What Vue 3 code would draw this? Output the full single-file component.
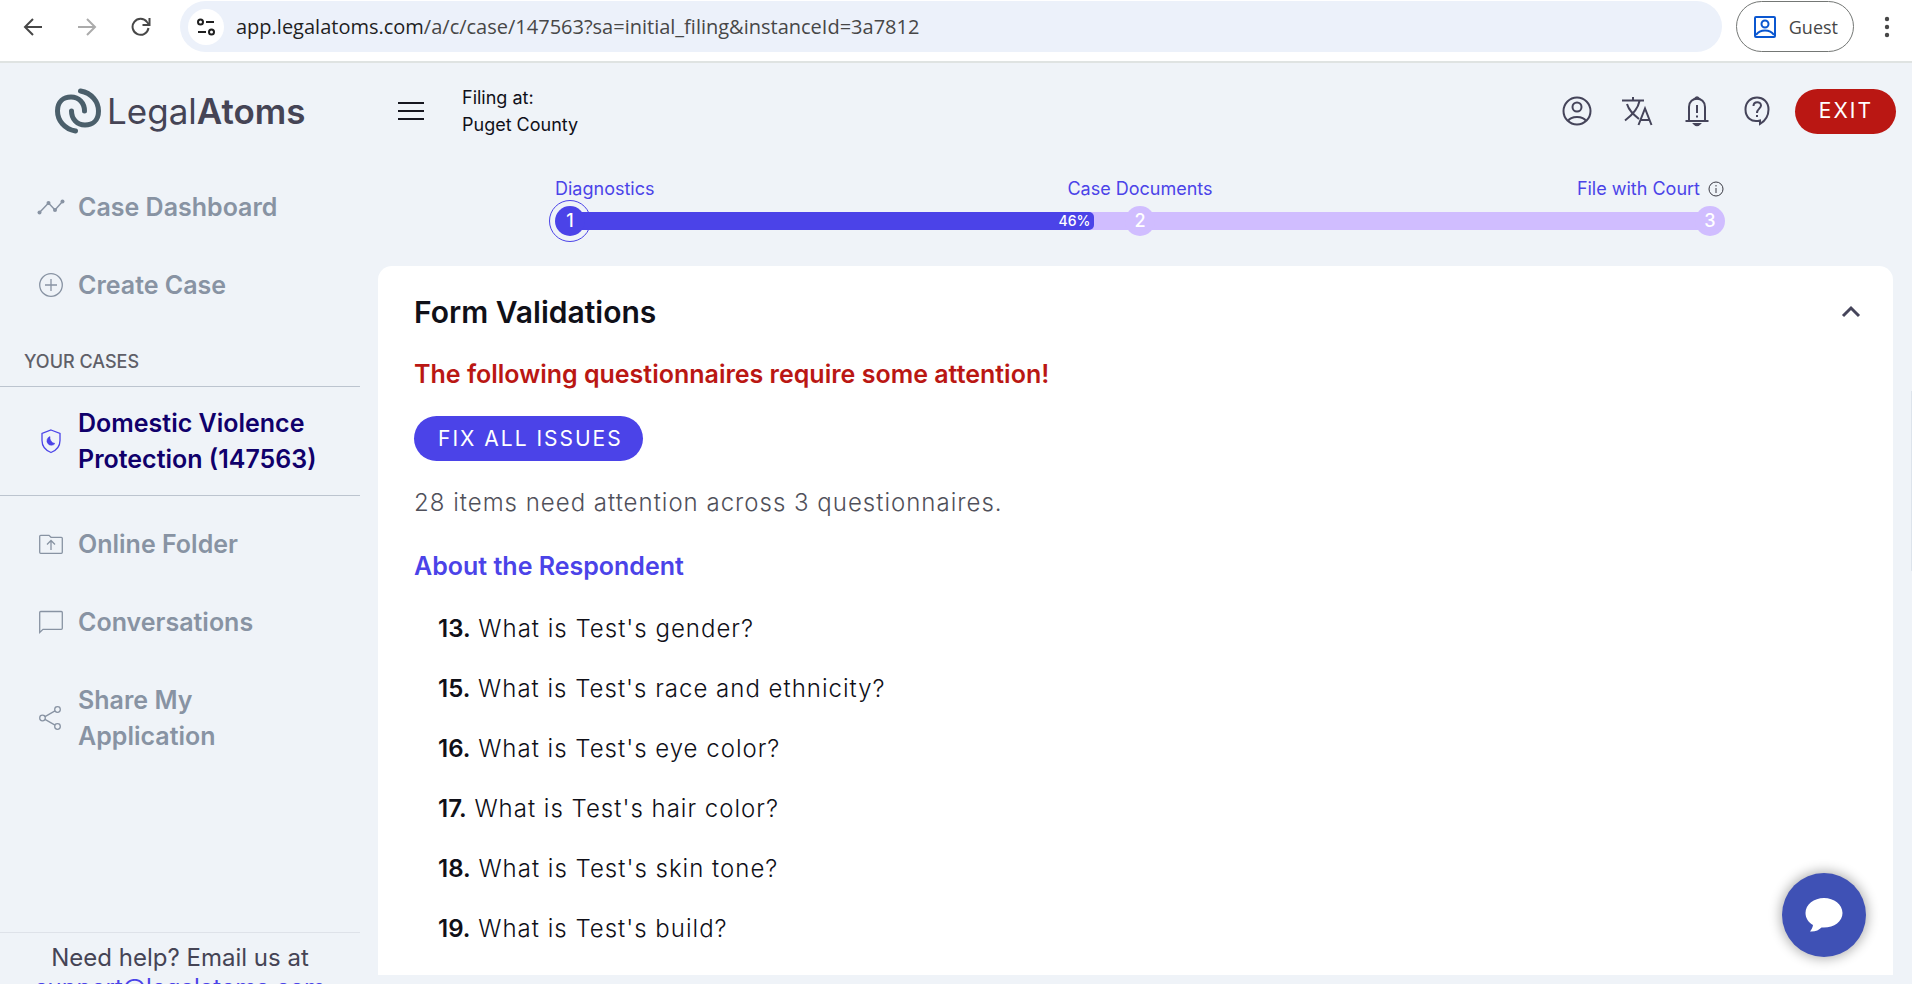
<script setup>
const primaryNav = [
  { label: 'Case Dashboard', icon: 'trend' },
  { label: 'Create Case', icon: 'plus' },
]
const secondaryNav = [
  { label: 'Online Folder', icon: 'folder' },
  { label: 'Conversations', icon: 'chat' },
  { label: 'Share My Application', icon: 'share' },
]
const progress = 46
const issues = [
  { no: 13, text: "What is Test's gender?" },
  { no: 15, text: "What is Test's race and ethnicity?" },
  { no: 16, text: "What is Test's eye color?" },
  { no: 17, text: "What is Test's hair color?" },
  { no: 18, text: "What is Test's skin tone?" },
  { no: 19, text: "What is Test's build?" },
]
</script>

<template>
  <div class="window">
    <div class="browser">
      <button class="tool" aria-label="Back">
        <svg width="20" height="20" viewBox="0 0 20 20" fill="none" stroke="#474747" stroke-width="2"><path d="M19 10H2M10 2l-8 8 8 8" /></svg>
      </button>
      <button class="tool" aria-label="Forward">
        <svg width="20" height="20" viewBox="0 0 20 20" fill="none" stroke="#ababab" stroke-width="2"><path d="M1 10h17M10 2l8 8-8 8" /></svg>
      </button>
      <button class="tool" aria-label="Reload">
        <svg width="20" height="20" viewBox="0 0 20 20" fill="none" stroke="#474747" stroke-width="2"><path d="M17.5 11a8 8 0 1 1-1.5-6l2 2.500" /><path d="M18.500 1v7h-7" /></svg>
      </button>
      <div class="omnibox">
        <button class="site" aria-label="Site information">
          <svg width="20" height="20" viewBox="0 0 20 20" fill="none" stroke="#1f1f1f" stroke-width="2"><circle cx="4.500" cy="5" r="2.500" /><path d="M10 5h8M2 15h8" /><circle cx="15.500" cy="15" r="2.500" /></svg>
        </button>
        <div class="url"><span class="host">app.legalatoms.com</span>/a/c/case/147563?sa=initial_filing&amp;instanceId=3a7812</div>
      </div>
      <button class="guest">
        <svg width="24" height="24" viewBox="0 0 24 24" fill="none" stroke="#0b57d0" stroke-width="2"><rect x="2" y="2" width="20" height="20" rx="1" /><circle cx="12" cy="9" r="3.500" /><path d="M3 20c4-6 14-6 18 0" /></svg>
        Guest
      </button>
      <button class="kebab" aria-label="Menu">
        <svg width="6" height="22" viewBox="0 0 6 22" fill="#474747"><circle cx="3" cy="3" r="2.200" /><circle cx="3" cy="11" r="2.200" /><circle cx="3" cy="19" r="2.200" /></svg>
      </button>
    </div>

    <div class="app">
      <aside class="sidebar">
        <a class="logo" href="#">
          <svg width="46" height="46" viewBox="0 0 46 46" fill="none" stroke="#4b5f6b" stroke-width="5" stroke-linecap="round"><path d="M25.500 3C37 5 43.500 14 43.500 23C43.500 33 37 37 30 37C22 37 16.500 31 16.500 23" /><path d="M20.500 43C9 41 2.500 32 2.500 23C2.500 13 9 9 16 9C24 9 29.500 15 29.500 23" /></svg>
          <span class="brand">Legal<b>Atoms</b></span>
        </a>
        <nav class="nav">
          <a v-for="item in primaryNav" :key="item.label" class="item" href="#">
            <svg v-if="item.icon === 'trend'" width="28" height="28" viewBox="0 0 28 28" fill="none" stroke="currentColor" stroke-width="1.500"><path d="M2.500 19.500l9-9.500 6.500 7 7.500-8.500" /><g fill="currentColor" stroke="none"><circle cx="2.500" cy="19.500" r="2" /><circle cx="11.500" cy="10" r="2" /><circle cx="18" cy="17" r="2" /><circle cx="25.500" cy="8.500" r="2" /></g></svg>
            <svg v-else width="28" height="28" viewBox="0 0 28 28" fill="none" stroke="currentColor" stroke-width="1.300"><circle cx="14" cy="14" r="11.300" /><path d="M14 8v12M8 14h12" /></svg>
            <span>{{ item.label }}</span>
          </a>
          <h2 class="group">YOUR CASES</h2>
          <a class="item current" href="#">
            <svg width="28" height="28" viewBox="0 0 28 28" fill="none" stroke="#4b43e8" stroke-width="1.300"><path d="M14 3l9 3.500v7c0 6-4 10-9 12-5-2-9-6-9-12v-7z" /><path d="M13 9.500a4.500 4.500 0 1 0 5 7 6 6 0 0 1-5-7z" fill="#4b43e8" stroke-width=".5" /></svg>
            <span>Domestic Violence Protection (147563)</span>
          </a>
          <a v-for="item in secondaryNav" :key="item.label" class="item" href="#">
            <svg v-if="item.icon === 'folder'" width="28" height="28" viewBox="0 0 28 28" fill="none" stroke="currentColor" stroke-width="1.300"><path d="M2.700 22.300v-16q0-1 1-1H12l2 2h10.300q1 0 1 1v14q0 1-1 1H3.700q-1 0-1-1z" /><path d="M14 20v-9M10 14.500l4-4 4 4" /></svg>
            <svg v-else-if="item.icon === 'chat'" width="28" height="28" viewBox="0 0 28 28" fill="none" stroke="currentColor" stroke-width="1.300"><path d="M2.700 24.500V4.500q0-1 1-1h20.600q1 0 1 1v15.800q0 1-1 1H6z" /></svg>
            <svg v-else width="28" height="28" viewBox="0 0 28 28" fill="none" stroke="currentColor" stroke-width="1.300"><circle cx="5.500" cy="14" r="2.800" /><circle cx="20.500" cy="5.500" r="2.800" /><circle cx="20.500" cy="22.500" r="2.800" /><path d="M8 12.600l10-5.700M8 15.400l10 5.700" /></svg>
            <span>{{ item.label }}</span>
          </a>
        </nav>
        <div class="help">Need help? Email us at <a href="mailto:support@legalatoms.com">support@legalatoms.com</a></div>
      </aside>

      <div class="content">
        <header class="topbar">
          <button class="burger" aria-label="Toggle menu">
            <svg width="26" height="20" viewBox="0 0 26 20" stroke="#16161f" stroke-width="2"><path d="M0 2h26M0 10h26M0 18h26" /></svg>
          </button>
          <p class="filing">Filing at:<br />Puget County</p>
          <div class="actions">
            <button aria-label="Account">
              <svg width="32" height="32" viewBox="0 0 32 32"><circle cx="16" cy="16" r="13.500" /><circle cx="16" cy="12" r="4.500" /><path d="M7 26c3-5.500 15-5.500 18 0" /></svg>
            </button>
            <button aria-label="Language">
              <svg width="32" height="32" viewBox="0 0 32 32"><path d="M1 5.500h22M12 2v3.500M6 9c2 7 7 11 12 15M18.500 6C17 14 10 21 4 25.500" /><path d="M17.500 30L24 13.500 30.500 30M19.500 25h9" /></svg>
            </button>
            <button aria-label="Notifications">
              <svg width="32" height="32" viewBox="0 0 32 32"><path d="M4.500 26h23M8 26V12c0-11 16-11 16 0v14M16 10v8M16 20.500v2" /><path d="M14 3.500q2-2.500 4 0zM13.500 29h5q-2.500 2.500-5 0z" fill="#45445a" /></svg>
            </button>
            <button aria-label="Help">
              <svg width="32" height="32" viewBox="0 0 32 32"><path d="M19 29v-3.500C10 28 4.500 22 4.500 14.500c0-16 23-16 23 0C27.500 21 24 26 19 29z" /><path d="M12.500 11c0-5 7.500-5 7.500-.5 0 3-4 3.500-4 7.500M16 20v2" /></svg>
            </button>
            <button class="exit">EXIT</button>
          </div>
        </header>

        <section class="stepper" aria-label="Progress">
          <div class="labels">
            <span>Diagnostics</span>
            <span>Case Documents</span>
            <span class="last">File with Court
              <svg width="16" height="16" viewBox="0 0 16 16" fill="none" stroke="#3a3a44"><circle cx="8" cy="8" r="7" /><path d="M8 7v5M8 4v1.500" /></svg>
            </span>
          </div>
          <div class="track">
            <i class="ring"></i>
            <div class="bar"><div class="fill" :style="{ width: progress + '%' }">{{ progress }}%</div></div>
            <span class="dot active">1</span>
            <span class="dot">2</span>
            <span class="dot">3</span>
          </div>
        </section>

        <main class="card">
          <div class="card-head">
            <h1>Form Validations</h1>
            <button aria-label="Collapse">
              <svg width="24" height="24" viewBox="0 0 24 24" fill="none" stroke="#45445a" stroke-width="3"><path d="M4 16l8-8 8 8" /></svg>
            </button>
          </div>
          <p class="alert">The following questionnaires require some attention!</p>
          <button class="fix">FIX ALL ISSUES</button>
          <p class="summary">28 items need attention across 3 questionnaires.</p>
          <a class="section" href="#">About the Respondent</a>
          <ul class="issues">
            <li v-for="q in issues" :key="q.no"><b>{{ q.no }}.</b> {{ q.text }}</li>
          </ul>
        </main>
      </div>
    </div>

    <i class="scroll-thumb"></i>
    <button class="bubble" aria-label="Open chat">
      <svg width="38" height="36" viewBox="0 0 38 36" fill="#fff"><path d="M19 1C9 1 .5 7.500.5 16c0 5 3 9.500 7.500 12-.3 2.500-1.500 4.500-3 6.500 5 .5 9-1.500 11.500-4 11.500 1 21-5.500 21-14.500C37.500 7.500 29 1 19 1z" /></svg>
    </button>
  </div>
</template>

<style>
body {
  margin: 0;
  overflow: hidden;
}
</style>

<style scoped>
.window {
  position: relative;
  display: flex;
  flex-direction: column;
  height: 100vh;
  overflow: hidden;
  background: #eff3f8;
  color: #101018;
  font-family: Inter, "Liberation Sans", sans-serif;
  font-size: 24px;
  line-height: 36px;
}
button {
  padding: 0;
  border: 0;
  background: none;
  color: inherit;
  font: inherit;
  cursor: pointer;
}
a {
  text-decoration: none;
}
h1,
h2,
p,
ul {
  margin: 0;
  padding: 0;
}
svg {
  display: block;
  flex: none;
}

.browser {
  display: flex;
  flex: none;
  align-items: flex-start;
  height: 60px;
  padding: 1px 22px 0 22px;
  border-bottom: 2px solid #dfe3e2;
  background: #fff;
  font-family: "Open Sans", "Noto Sans", sans-serif;
}
.tool {
  display: flex;
  align-items: center;
  justify-content: center;
  width: 22px;
  height: 51px;
  margin-right: 32px;
}
.tool:nth-child(3) {
  margin-right: 28px;
}
.omnibox {
  display: flex;
  flex: 1;
  align-items: center;
  height: 51px;
  padding-left: 8px;
  border-radius: 26px;
  background: #ecf1fa;
}
.site {
  display: flex;
  align-items: center;
  justify-content: center;
  width: 36px;
  height: 36px;
  border-radius: 50%;
  background: #fff;
}
.url {
  margin-left: 12px;
  color: #474747;
  font-size: 20px;
}
.host {
  color: #1f1f1f;
}
.guest {
  display: flex;
  align-items: center;
  gap: 12px;
  height: 51px;
  margin: 0 30px 0 14px;
  padding: 0 15px 0 16px;
  border: 1px solid #747775;
  border-radius: 26px;
  color: #474747;
  font-size: 18px;
}
.kebab {
  display: flex;
  align-items: center;
  height: 51px;
}

.app {
  display: flex;
  flex: 1;
  min-height: 0;
}
.sidebar {
  display: flex;
  flex: none;
  flex-direction: column;
  width: 360px;
}
.logo {
  display: flex;
  align-items: center;
  gap: 6px;
  height: 96px;
  padding-left: 55px;
  color: #454455;
  font-size: 35px;
}
.brand b {
  font-weight: 600;
}
.nav {
  flex: 1;
  min-height: 0;
  padding-top: 9px;
  overflow: hidden;
}
.item {
  display: flex;
  align-items: center;
  gap: 13px;
  padding: 21px 30px 21px 37px;
  color: #8893a3;
  font-size: 25px;
  font-weight: 600;
}
.item:last-child {
  padding-right: 120px;
}
.group {
  padding: 22px 24px 8px;
  color: #5f5f68;
  font-size: 18px;
  font-weight: 500;
  line-height: 32px;
}
.current {
  margin-bottom: 9px;
  padding-top: 18px;
  padding-bottom: 18px;
  border-top: 1px solid #bcc4cf;
  border-bottom: 1px solid #bcc4cf;
  color: #10006b;
}
.help {
  height: 41px;
  padding: 10px 20px 0;
  overflow: hidden;
  border-top: 1px solid #dee2e9;
  color: #454455;
  line-height: 30px;
  text-align: center;
}
.help a {
  color: #4b43e8;
}

.content {
  flex: 1;
  min-width: 0;
  padding: 0 19px 9px 18px;
  overflow: hidden;
}
.topbar {
  display: flex;
  align-items: center;
  height: 96px;
  padding-left: 20px;
}
.filing {
  margin-left: 38px;
  font-size: 18px;
  line-height: 27px;
}
.actions {
  display: flex;
  align-items: center;
  gap: 28px;
  margin: 0 -3px 0 auto;
}
.actions svg {
  fill: none;
  stroke: #45445a;
  stroke-width: 2;
}
.actions .exit {
  height: 45px;
  margin-left: -6px;
  padding: 0 23px 0 24px;
  border-radius: 23px;
  background: #ba1713;
  color: #fff;
  font-size: 21px;
  letter-spacing: 2px;
}

.stepper {
  padding: 16px 168px 29px 177px;
}
.labels {
  display: grid;
  grid-template-columns: 1fr auto 1fr;
  color: #4b43e8;
  font-size: 18px;
  line-height: 28px;
}
.last {
  display: flex;
  align-items: center;
  justify-content: flex-end;
  gap: 8px;
  padding-right: 1px;
}
.track {
  position: relative;
  display: flex;
  align-items: center;
  justify-content: space-between;
  height: 32px;
  margin-top: 2px;
}
.bar {
  position: absolute;
  right: 15px;
  left: 15px;
  height: 18px;
  background: #d0bdff;
}
.fill {
  box-sizing: border-box;
  height: 18px;
  padding-right: 4px;
  border-radius: 0 5px 5px 0;
  background: #4b43e8;
  color: #fff;
  font-size: 14px;
  font-weight: 500;
  line-height: 18px;
  text-align: right;
}
.dot {
  position: relative;
  width: 30px;
  height: 30px;
  border-radius: 50%;
  background: #d0bdff;
  color: #fff;
  font-size: 18px;
  font-weight: 500;
  line-height: 30px;
  text-align: center;
}
.dot.active {
  background: #4b43e8;
}
.ring {
  position: absolute;
  left: -6px;
  width: 40px;
  height: 40px;
  border: 1px solid #4b43e8;
  border-radius: 50%;
}

.card {
  padding: 24px 30px 28px 36px;
  border-radius: 14px 14px 0 0;
  background: #fff;
}
.card-head {
  display: flex;
  align-items: center;
  justify-content: space-between;
}
h1 {
  font-size: 30px;
  font-weight: 600;
  line-height: 44px;
}
.alert {
  margin-top: 22px;
  color: #ba1713;
  font-size: 25px;
  font-weight: 600;
}
.fix {
  display: block;
  height: 45px;
  margin: 24px 0;
  padding: 0 20px 0 24px;
  border-radius: 23px;
  background: #4b43e8;
  color: #fff;
  font-size: 21px;
  letter-spacing: 2px;
}
.summary {
  color: #50505a;
  font-weight: 300;
  letter-spacing: 1px;
}
.section {
  display: block;
  margin: 27px 0;
  color: #4b43e8;
  font-size: 25px;
  font-weight: 600;
}
.issues {
  display: grid;
  gap: 24px;
  padding-left: 24px;
  font-weight: 300;
  list-style: none;
  letter-spacing: 1px;
}
.issues b {
  font-weight: 600;
  letter-spacing: 0;
}

.scroll-thumb {
  position: absolute;
  top: 391px;
  right: 0;
  width: 1px;
  height: 180px;
  background: #dde4ec;
}
.bubble {
  position: absolute;
  right: 46px;
  bottom: 27px;
  display: flex;
  align-items: center;
  justify-content: center;
  width: 84px;
  height: 84px;
  border-radius: 50%;
  background: #3f51b5;
  box-shadow: 0 0 12px 2px rgba(0, 0, 0, 0.3);
}
</style>
